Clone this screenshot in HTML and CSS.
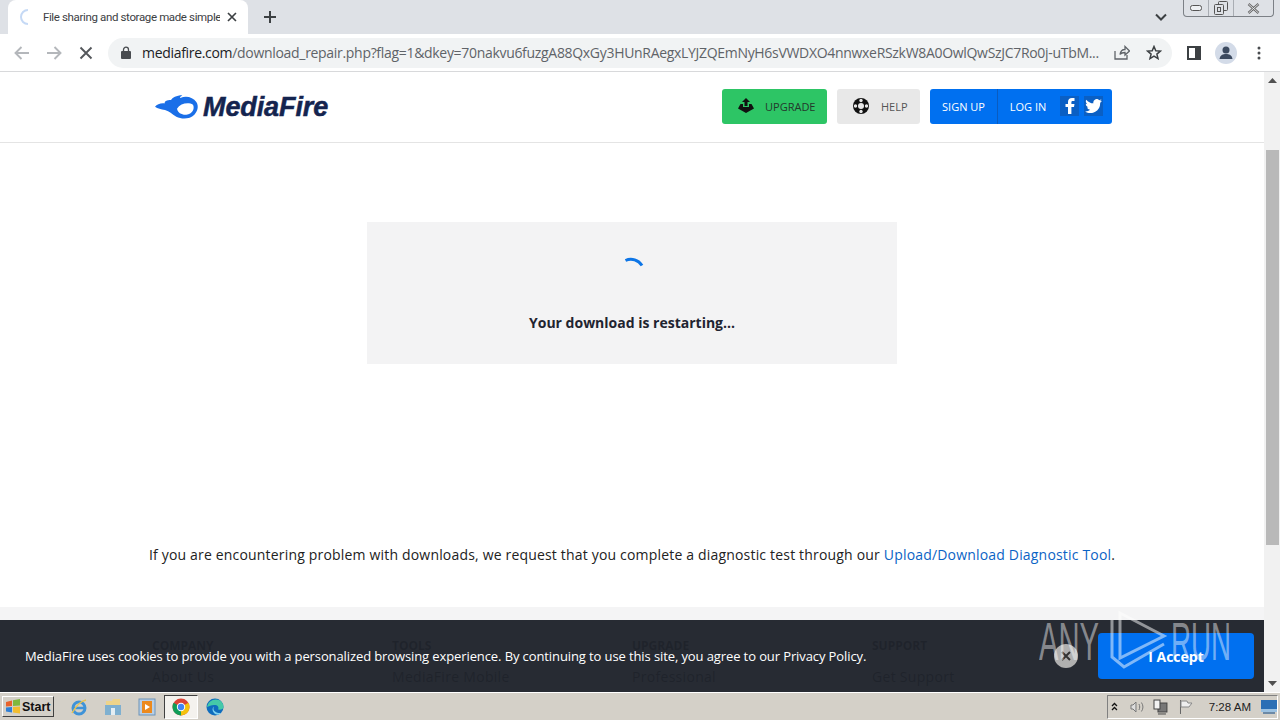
FILE: index.html
```html
<!DOCTYPE html>
<html lang="en">
<head>
    <meta charset="UTF-8">
    <meta name="viewport" content="width=device-width, initial-scale=1.0">
    <title>File sharing and storage made simple</title>
    <link rel="stylesheet" href="styles.css">
</head>
<body>

    <!-- Browser tab strip -->
    <div class="tabbar">
        <div class="tab">
            <svg class="tab-spinner" width="16" height="16" viewBox="0 0 16 16"><path d="M8 1A7 7 0 0 0 8 15" fill="none" stroke="#c5d9f5" stroke-width="2"/></svg>
            <span class="tab-title">File sharing and storage made simple</span>
            <svg width="10" height="10" viewBox="0 0 10 10"><path d="M1 1L9 9M9 1L1 9" stroke="#3c4043" stroke-width="1.7"/></svg>
        </div>
        <svg class="new-tab" width="12" height="12" viewBox="0 0 12 12"><path d="M6 0V12M0 6H12" stroke="#3c4043" stroke-width="2"/></svg>
        <svg class="tab-menu" width="12" height="8" viewBox="0 0 12 8"><path d="M1 1.5L6 6.5L11 1.5" fill="none" stroke="#3c4043" stroke-width="2"/></svg>
        <div class="win-buttons">
            <div class="win-btn win-min"><svg width="12" height="6" viewBox="0 0 12 6"><rect x="0.5" y="0.5" width="11" height="5" rx="2" fill="#eef0f3" stroke="#555"/></svg></div>
            <div class="win-btn win-max"><svg width="14" height="14" viewBox="0 0 14 14"><rect x="4.5" y="0.5" width="9" height="9" rx="1" fill="none" stroke="#555"/><rect x="0.5" y="3.5" width="9" height="10" rx="1" fill="#dee1e6" stroke="#555"/><rect x="3.5" y="6.5" width="3" height="4" fill="none" stroke="#555"/></svg></div>
            <div class="win-btn win-close"><svg width="13" height="11" viewBox="0 0 13 11"><path d="M1.5 1L11.5 10M11.5 1L1.5 10" stroke="#666" stroke-width="2.4"/><path d="M1.5 1L11.5 10M11.5 1L1.5 10" stroke="#e8eaed" stroke-width="0.9"/></svg></div>
        </div>
    </div>

    <!-- Address bar row -->
    <div class="toolbar">
        <svg class="nav-icon" width="16" height="14" viewBox="0 0 16 14"><path d="M15 7H2M7.500 1L1.500 7L7.500 13" fill="none" stroke="#b4b7bb" stroke-width="1.900"/></svg>
        <svg class="nav-icon" width="16" height="14" viewBox="0 0 16 14"><path d="M1 7H14M8.500 1L14.500 7L8.500 13" fill="none" stroke="#b4b7bb" stroke-width="1.900"/></svg>
        <svg class="nav-icon" width="14" height="14" viewBox="0 0 14 14"><path d="M1.500 1.500L12.500 12.500M12.500 1.500L1.500 12.500" stroke="#54575b" stroke-width="1.900"/></svg>
        <div class="omnibox">
            <svg class="lock" width="10" height="13" viewBox="0 0 10 13"><path d="M2.500 6V3.700a2.500 2.500 0 0 1 5 0V6" fill="none" stroke="#494c50" stroke-width="1.300"/><rect y="5" width="10" height="8" rx="1" fill="#494c50"/></svg>
            <div class="url"><span class="url-host">mediafire.com</span>/download_repair.php?flag=1&amp;dkey=70nakvu6fuzgA88QxGy3HUnRAegxLYJZQEmNyH6sVWDXO4nnwxeRSzkW8A0OwlQwSzJC7Ro0j-uTbM...</div>
            <svg class="omni-icon" width="16" height="15" viewBox="0 0 16 15"><path d="M1 6V14H13V10M6 9.500C6.500 6 9 4.500 11 4.500V1.500L15.500 6L11 10V7.500C9 7.500 7 8 6 9.500Z" fill="none" stroke="#5f6368" stroke-width="1.300"/></svg>
            <svg class="omni-icon" width="16" height="15" viewBox="0 0 16 15"><path d="M8 1.500L9.800 5.700L14.400 6.100L10.900 9.100L12 13.600L8 11.200L4 13.600L5.100 9.100L1.600 6.100L6.200 5.700Z" fill="none" stroke="#3c4043" stroke-width="1.500"/></svg>
        </div>
        <svg class="panel-icon" width="14" height="14" viewBox="0 0 14 14"><rect x="1" y="1" width="12" height="12" fill="none" stroke="#3c4043" stroke-width="2"/><rect x="8" y="1" width="5" height="12" fill="#3c4043"/></svg>
        <div class="avatar"><svg width="22" height="22" viewBox="0 0 22 22"><circle cx="11" cy="8" r="3.500" fill="#3c4a60"/><path d="M4.500 17C5 13 8 12 11 12S17 13 17.500 17Z" fill="#3c4a60"/></svg></div>
        <svg class="dots" width="4" height="14" viewBox="0 0 4 14"><circle cx="2" cy="2" r="1.500" fill="#494c50"/><circle cx="2" cy="7" r="1.500" fill="#494c50"/><circle cx="2" cy="12" r="1.500" fill="#494c50"/></svg>
    </div>

    <div class="viewport">
        <div class="site">
            <header class="site-header">
                <a class="logo">
                    <svg width="44" height="26" viewBox="48 40 132 78"><path fill-rule="evenodd" fill="#1a6fe8" d="M48 78C54 70 66 66 78 68C74 62 84 58 96 58C100 52 112 44 130 44C124 48 122 50 124 52C142 44 162 50 172 64C180 76 176 92 166 102C152 116 128 116 112 108C98 100 92 92 78 88C66 85 56 84 48 78ZM114 84C124 68 148 64 162 72C168 84 160 100 142 102C128 103 116 96 114 84Z"/></svg>
                    <span class="logo-text">MediaFire</span>
                </a>
                <nav class="site-nav">
                    <a class="nav-btn btn-upgrade">
                        <svg width="18" height="16" viewBox="0 0 18 16"><path d="M9 0L13 4H10.500V8H7.500V4H5Z" fill="#111"/><path d="M3.500 6H6V9H12V6H14.500L17 10.500L9 15L1 10.500Z" fill="#111"/></svg>
                        <span>UPGRADE</span>
                    </a>
                    <a class="nav-btn btn-help">
                        <svg width="16" height="16" viewBox="0 0 16 16"><circle cx="8" cy="8" r="8" fill="#111"/><circle cx="8" cy="8" r="3" fill="#e8e8e8"/><circle cx="8" cy="2.500" r="1.700" fill="#e8e8e8"/><circle cx="8" cy="13.500" r="1.700" fill="#e8e8e8"/><circle cx="2.500" cy="8" r="1.700" fill="#e8e8e8"/><circle cx="13.500" cy="8" r="1.700" fill="#e8e8e8"/></svg>
                        <span>HELP</span>
                    </a>
                    <div class="btn-account">
                        <a class="account-link link-signup">SIGN UP</a>
                        <a class="account-link link-login">LOG IN</a>
                        <span class="social">
                            <svg width="10" height="16" viewBox="0 0 10 16"><path d="M3 16V9H0.500V6H3V4C3 1.500 4.500 0 7 0H9.500V3H7.800C6.800 3 6.400 3.400 6.400 4.200V6H9.500L9 9H6.400V16Z" fill="#fff"/></svg>
                        </span>
                        <span class="social">
                            <svg width="17" height="14" viewBox="0 0 24 20"><path d="M24 2.400c-.9.400-1.800.7-2.800.8 1-.6 1.800-1.600 2.200-2.700-1 .6-2 1-3.100 1.200A4.900 4.900 0 0 0 11.900 6.200C7.800 6 4.200 4 1.700.9.400 3.100 1 6 3.200 7.500c-.8 0-1.600-.2-2.200-.6 0 2.300 1.600 4.400 3.900 4.900-.7.200-1.500.2-2.200.1.600 2 2.400 3.400 4.600 3.400A9.900 9.900 0 0 1 0 17.800 13.900 13.900 0 0 0 21.500 5.500c1-.7 1.800-1.600 2.500-3.100z" fill="#fff"/></svg>
                        </span>
                    </div>
                </nav>
            </header>

            <main class="site-main">
                <div class="restart-card">
                    <svg class="spinner" width="30" height="16" viewBox="0 0 30 16"><path d="M4.500 3.500A13 13 0 0 1 21 8.500" fill="none" stroke="#0d75e6" stroke-width="3"/></svg>
                    <p class="restart-text">Your download is restarting...</p>
                </div>
                <p class="diagnostic">If you are encountering problem with downloads, we request that you complete a diagnostic test through our <a class="diagnostic-link">Upload/Download Diagnostic Tool</a>.</p>
            </main>

            <footer class="site-footer">
                <div class="footer-col"><h4>COMPANY</h4><a>About Us</a></div>
                <div class="footer-col"><h4>TOOLS</h4><a>MediaFire Mobile</a></div>
                <div class="footer-col"><h4>UPGRADE</h4><a>Professional</a></div>
                <div class="footer-col"><h4>SUPPORT</h4><a>Get Support</a></div>
            </footer>
        </div>

        <div class="scrollbar">
            <svg width="9" height="5" viewBox="0 0 9 5"><path d="M4.500 0L9 5H0Z" fill="#505050"/></svg>
            <div class="scroll-thumb"></div>
            <svg width="9" height="5" viewBox="0 0 9 5"><path d="M0 0H9L4.500 5Z" fill="#505050"/></svg>
        </div>

        <!-- Cookie notice sits over the footer -->
        <div class="cookie-bar">
            <p class="cookie-text">MediaFire uses cookies to provide you with a personalized browsing experience. By continuing to use this site, you agree to our Privacy Policy.</p>
            <button class="cookie-close"><svg width="10" height="10" viewBox="0 0 10 10"><path d="M1 1L9 9M9 1L1 9" stroke="#333" stroke-width="2"/></svg></button>
            <button class="cookie-accept">I Accept</button>
        </div>

        <!-- Sandbox watermark -->
        <svg class="watermark" width="200" height="66" viewBox="0 0 200 66">
            <text x="0" y="50" class="wm-text" textLength="60" lengthAdjust="spacingAndGlyphs">ANY</text>
            <text x="132" y="50" class="wm-text" textLength="60" lengthAdjust="spacingAndGlyphs">RUN</text>
            <path d="M81 3L125 26L81 48Z" fill="none" stroke="#fff" stroke-opacity="0.5" stroke-width="3"/>
            <path d="M73 10V47L85 57L125 34" fill="none" stroke="#fff" stroke-opacity="0.5" stroke-width="3"/>
        </svg>
    </div>

    <!-- Windows taskbar -->
    <div class="taskbar">
        <div class="start-btn">
            <svg width="16" height="15" viewBox="0 0 16 15"><path d="M1 3L7 1.500V7L1 7.500Z" fill="#e8622c"/><path d="M8 1.300L15 0V6.500L8 7Z" fill="#7fb83c"/><path d="M1 8.500L7 8V13.500L1 12.500Z" fill="#2f7fd6"/><path d="M8 8L15 7.500V14.500L8 13.500Z" fill="#f2bd2e"/></svg>
            <span>Start</span>
        </div>
        <div class="task-icon"><svg width="18" height="18" viewBox="0 0 18 18"><circle cx="9" cy="10" r="6" fill="none" stroke="#3f93d8" stroke-width="3"/><path d="M4 10H14" stroke="#3f93d8" stroke-width="2.500"/><path d="M2 15C6 8 11 3 16 2" fill="none" stroke="#e8c350" stroke-width="1.500"/></svg></div>
        <div class="task-icon"><svg width="18" height="18" viewBox="0 0 18 18"><path d="M2 3H8L9 1H16V9H2Z" fill="#eed48a"/><rect x="1" y="7" width="16" height="10" fill="#7fb0d0"/><rect x="7" y="10" width="4" height="7" fill="#e5eef3"/></svg></div>
        <div class="task-icon"><svg width="18" height="18" viewBox="0 0 18 18"><rect x="1" y="1" width="16" height="16" fill="#b8cfe6" stroke="#6d93b8"/><rect x="4" y="3" width="10" height="12" fill="#ec8a1e"/><path d="M7 6L12 9L7 12Z" fill="#fff"/></svg></div>
        <div class="task-icon task-active"><svg width="18" height="18" viewBox="0 0 18 18"><circle cx="9" cy="9" r="8.500" fill="#db4437"/><path d="M9 9L16.400 4.800A8.500 8.500 0 0 1 9 17.500Z" fill="#f4c20d"/><path d="M9 9L9 17.500A8.500 8.500 0 0 1 1.600 4.800Z" fill="#0f9d58"/><circle cx="9" cy="9" r="4.200" fill="#fff"/><circle cx="9" cy="9" r="3.200" fill="#4285f4"/></svg></div>
        <div class="task-icon"><svg width="18" height="18" viewBox="0 0 18 18"><circle cx="9" cy="9" r="8.500" fill="#0f6cbd"/><path d="M1 9C2 3 8 0 13 2C16 3.500 17.500 6 17.500 9.500C17.500 11 15 12 12 11.500C13 10 12.500 7.500 9.500 7C6 6.500 3 8 1 9Z" fill="#45c9a8"/><path d="M8 15C6 13 6 10 8 8.500C6 12 9.500 15.500 15 15C13 17.500 10 17 8 15Z" fill="#7ed1f0"/></svg></div>
        <div class="tray">
            <svg width="7" height="9" viewBox="0 0 7 9"><path d="M1 4L3.500 1.500L6 4M1 8L3.500 5.500L6 8" fill="none" stroke="#111" stroke-width="1.300"/></svg>
            <svg class="tray-wide" width="16" height="14" viewBox="0 0 16 14"><path d="M2 5H4L7 2V12L4 9H2Z" fill="#ddd" stroke="#777"/><path d="M10 4C11 6 11 8 10 10M12.500 2.500C14.500 5.500 14.500 8.500 12.500 11.500" fill="none" stroke="#777"/></svg>
            <svg width="15" height="16" viewBox="0 0 15 16"><rect x="5" y="4" width="9" height="9" fill="#777" stroke="#444"/><rect x="1" y="1" width="6" height="9" fill="#f2f2f2" stroke="#444"/><path d="M5 15H13" stroke="#444"/></svg>
            <svg class="tray-wide" width="14" height="16" viewBox="0 0 14 16"><path d="M1.500 1V15" stroke="#666"/><path d="M2 2H8L9 4H13L10 8H2Z" fill="#eee" stroke="#888"/></svg>
            <span class="clock">7:28 AM</span>
            <svg class="show-desktop" width="16" height="14" viewBox="0 0 16 14"><rect width="16" height="12" fill="#2b6fb5"/><rect y="9" width="16" height="3" fill="#9cc2e2"/><rect x="2" y="12" width="12" height="2" fill="#6d8aa6"/></svg>
        </div>
    </div>

</body>
</html>
```

FILE: styles.css
```css
body {
    margin: 0;
    width: 1280px;
    height: 720px;
    overflow: hidden;
    display: flex;
    flex-direction: column;
    font-family: 'Open Sans', sans-serif;
    background: #fff;
}

/* Browser chrome */
.tabbar {
    height: 34px;
    flex: none;
    display: flex;
    align-items: center;
    background: #dee1e6;
}

.tab {
    width: 240px;
    height: 34px;
    margin-left: 8px;
    display: flex;
    align-items: center;
    box-sizing: border-box;
    padding: 0 11px 0 12px;
    background: #fff;
    border-radius: 8px 8px 0 0;
}

.tab-title {
    width: 178px;
    margin: 0 7px 0 7px;
    white-space: nowrap;
    overflow: hidden;
    font-family: 'Roboto', sans-serif;
    font-size: 11.5px;
    letter-spacing: -0.36px;
    color: #3c4043;
}

.new-tab {
    margin-left: 16px;
}

.tab-menu {
    margin-left: 879px;
}

.win-buttons {
    margin-left: 16px;
    align-self: flex-start;
    display: flex;
    height: 16px;
    border: 1px solid #7c8086;
    border-top: none;
    border-radius: 0 0 4px 4px;
}

.win-btn {
    display: flex;
    align-items: center;
    justify-content: center;
    border-right: 1px solid #a9adb3;
}

.win-btn:last-child {
    border-right: none;
}

.win-min { width: 24px; }
.win-max { width: 24px; }
.win-close { width: 39px; }

.toolbar {
    height: 38px;
    flex: none;
    display: flex;
    align-items: center;
    box-sizing: border-box;
    padding-left: 14px;
    background: #fff;
    border-bottom: 1px solid #d8d9db;
}

.nav-icon {
    margin-right: 16px;
}

.nav-icon:nth-child(3) {
    margin-left: 1px;
    margin-right: 15px;
}

.omnibox {
    width: 1064px;
    height: 30px;
    display: flex;
    align-items: center;
    box-sizing: border-box;
    padding: 0 10px 0 13px;
    background: #f1f3f4;
    border-radius: 15px;
}

.url {
    width: 958px;
    margin: 0 14px 0 11px;
    white-space: nowrap;
    overflow: hidden;
    font-size: 14px;
    letter-spacing: -0.31px;
    color: #5f6368;
}

.url-host {
    color: #202124;
}

.omni-icon {
    margin-right: 16px;
}

.omni-icon:last-child {
    margin-right: 0;
}

.panel-icon {
    margin-left: 15px;
}

.avatar {
    width: 22px;
    height: 22px;
    margin-left: 14px;
    border-radius: 50%;
    background: #d3dbe8;
}

.dots {
    margin-left: 20px;
}

/* Page area */
.viewport {
    position: relative;
    flex: 1;
    display: flex;
    overflow: hidden;
}

.site {
    flex: 1;
    min-width: 0;
    overflow: hidden;
}

.site-header {
    height: 71px;
    box-sizing: border-box;
    display: flex;
    align-items: center;
    justify-content: space-between;
    padding: 0 152px 2px 155px;
    border-bottom: 1px solid #e4e4e4;
}

.logo {
    display: flex;
    align-items: center;
    gap: 4px;
    margin-top: 2px;
}

.logo-text {
    font-family: 'Liberation Sans', sans-serif;
    font-size: 27px;
    font-weight: 700;
    font-style: italic;
    letter-spacing: -0.1px;
    -webkit-text-stroke: 0.5px #14244f;
    color: #14244f;
}

.site-nav {
    display: flex;
    gap: 10px;
    font-size: 11px;
}

.nav-btn {
    height: 35px;
    display: flex;
    align-items: center;
    box-sizing: border-box;
    border-radius: 3px;
}

.btn-upgrade {
    width: 105px;
    padding-left: 15px;
    gap: 10px;
    background: #2dc565;
    color: #24382c;
}

.btn-help {
    width: 83px;
    padding-left: 16px;
    gap: 12px;
    background: #e8e8e8;
    color: #555;
}

.btn-account {
    width: 182px;
    height: 35px;
    display: flex;
    align-items: center;
    background: #0070f0;
    border-radius: 3px;
    color: #fff;
}

.account-link {
    line-height: 35px;
}

.link-signup {
    width: 67px;
    text-align: center;
    border-right: 1px solid #0a5cc0;
}

.link-login {
    width: 62px;
    box-sizing: border-box;
    padding-right: 2px;
    text-align: center;
}

.social {
    width: 19px;
    height: 20px;
    margin-right: 5px;
    display: flex;
    align-items: center;
    justify-content: center;
    background: #0a5fc4;
}

.site-main {
    height: 464px;
    box-sizing: border-box;
    padding-top: 79px;
    overflow: hidden;
}

.restart-card {
    width: 530px;
    height: 142px;
    margin: 0 auto;
    box-sizing: border-box;
    padding-top: 35px;
    text-align: center;
    background: #f3f3f4;
}

.spinner {
    display: block;
    margin: 0 auto;
    transform: translateX(4px);
}

.restart-text {
    margin: 40px 0 0;
    font-size: 14px;
    line-height: 20px;
    font-weight: 700;
    color: #1f2430;
}

.diagnostic {
    margin: 181px 0 0;
    text-align: center;
    font-size: 14px;
    line-height: 20px;
    letter-spacing: 0.18px;
    color: #222;
}

.diagnostic-link {
    color: #0b63c5;
}

.site-footer {
    height: 120px;
    box-sizing: border-box;
    padding: 30px 0 0 152px;
    display: grid;
    grid-template-columns: repeat(4, 240px);
    background: #f4f4f5;
}

.footer-col h4 {
    margin: 0 0 10px;
    font-size: 12px;
    line-height: 18px;
    color: #111;
}

.footer-col a {
    font-size: 14px;
    line-height: 20px;
    letter-spacing: 0.3px;
    color: #111;
}

.scrollbar {
    width: 16px;
    flex: none;
    display: flex;
    flex-direction: column;
    align-items: center;
    box-sizing: border-box;
    padding: 6px 0;
    background: #f1f1f1;
}

.scroll-thumb {
    width: 13px;
    height: 395px;
    margin: 67px 0 auto;
    background: #b9b9b9;
}

/* Cookie notice */
.cookie-bar {
    position: absolute;
    left: 0;
    right: 16px;
    bottom: 0;
    height: 72px;
    display: flex;
    align-items: center;
    box-sizing: border-box;
    padding: 0 10px 0 25px;
    background: rgba(32, 36, 44, 0.97);
}

.cookie-text {
    width: 1029px;
    margin: 0;
    font-size: 13px;
    letter-spacing: -0.105px;
    white-space: nowrap;
    color: #fff;
}

.cookie-close {
    width: 24px;
    height: 24px;
    padding: 0;
    border: none;
    border-radius: 50%;
    display: flex;
    align-items: center;
    justify-content: center;
    background: #b0b0b0;
}

.cookie-accept {
    width: 156px;
    height: 46px;
    margin-left: 20px;
    border: none;
    border-radius: 4px;
    font-family: 'Open Sans', sans-serif;
    font-size: 14px;
    font-weight: 700;
    color: #fff;
    background: #0070f0;
}

.watermark {
    position: absolute;
    left: 1039px;
    top: 538px;
}

.wm-text {
    font-family: 'Liberation Sans', sans-serif;
    font-size: 54px;
    fill: #fff;
    fill-opacity: 0.45;
}

/* Windows taskbar */
.taskbar {
    height: 28px;
    flex: none;
    display: flex;
    align-items: center;
    box-sizing: border-box;
    padding-left: 2px;
    background: #d4d0c8;
    border-top: 1px solid #fff;
}

.start-btn {
    width: 52px;
    height: 21px;
    display: flex;
    align-items: center;
    gap: 1px;
    box-sizing: border-box;
    padding-left: 2px;
    border: 1px solid;
    border-color: #fff #404040 #404040 #fff;
    font-family: 'Liberation Sans', sans-serif;
    font-size: 12.500px;
    font-weight: 700;
    color: #111;
}

.task-icon {
    width: 34px;
    height: 24px;
    display: flex;
    align-items: center;
    justify-content: center;
}

.start-btn + .task-icon {
    margin-left: 8px;
}

.task-active {
    box-sizing: border-box;
    background: #f4f2ee;
    border: 1px solid;
    border-color: #404040 #fff #fff #404040;
}

.tray {
    width: 171px;
    height: 24px;
    margin-left: auto;
    margin-right: 2px;
    display: flex;
    align-items: center;
    box-sizing: border-box;
    padding-left: 3px;
    gap: 8px;
    border: 1px solid;
    border-color: #808080 #fff #fff #808080;
}

.tray-wide {
    margin-left: 3px;
}

.clock {
    flex: none;
    margin-left: 8px;
    white-space: nowrap;
    font-family: 'Liberation Sans', sans-serif;
    font-size: 11.500px;
    color: #222;
}

.show-desktop {
    flex: none;
    margin-left: 2px;
}
```
